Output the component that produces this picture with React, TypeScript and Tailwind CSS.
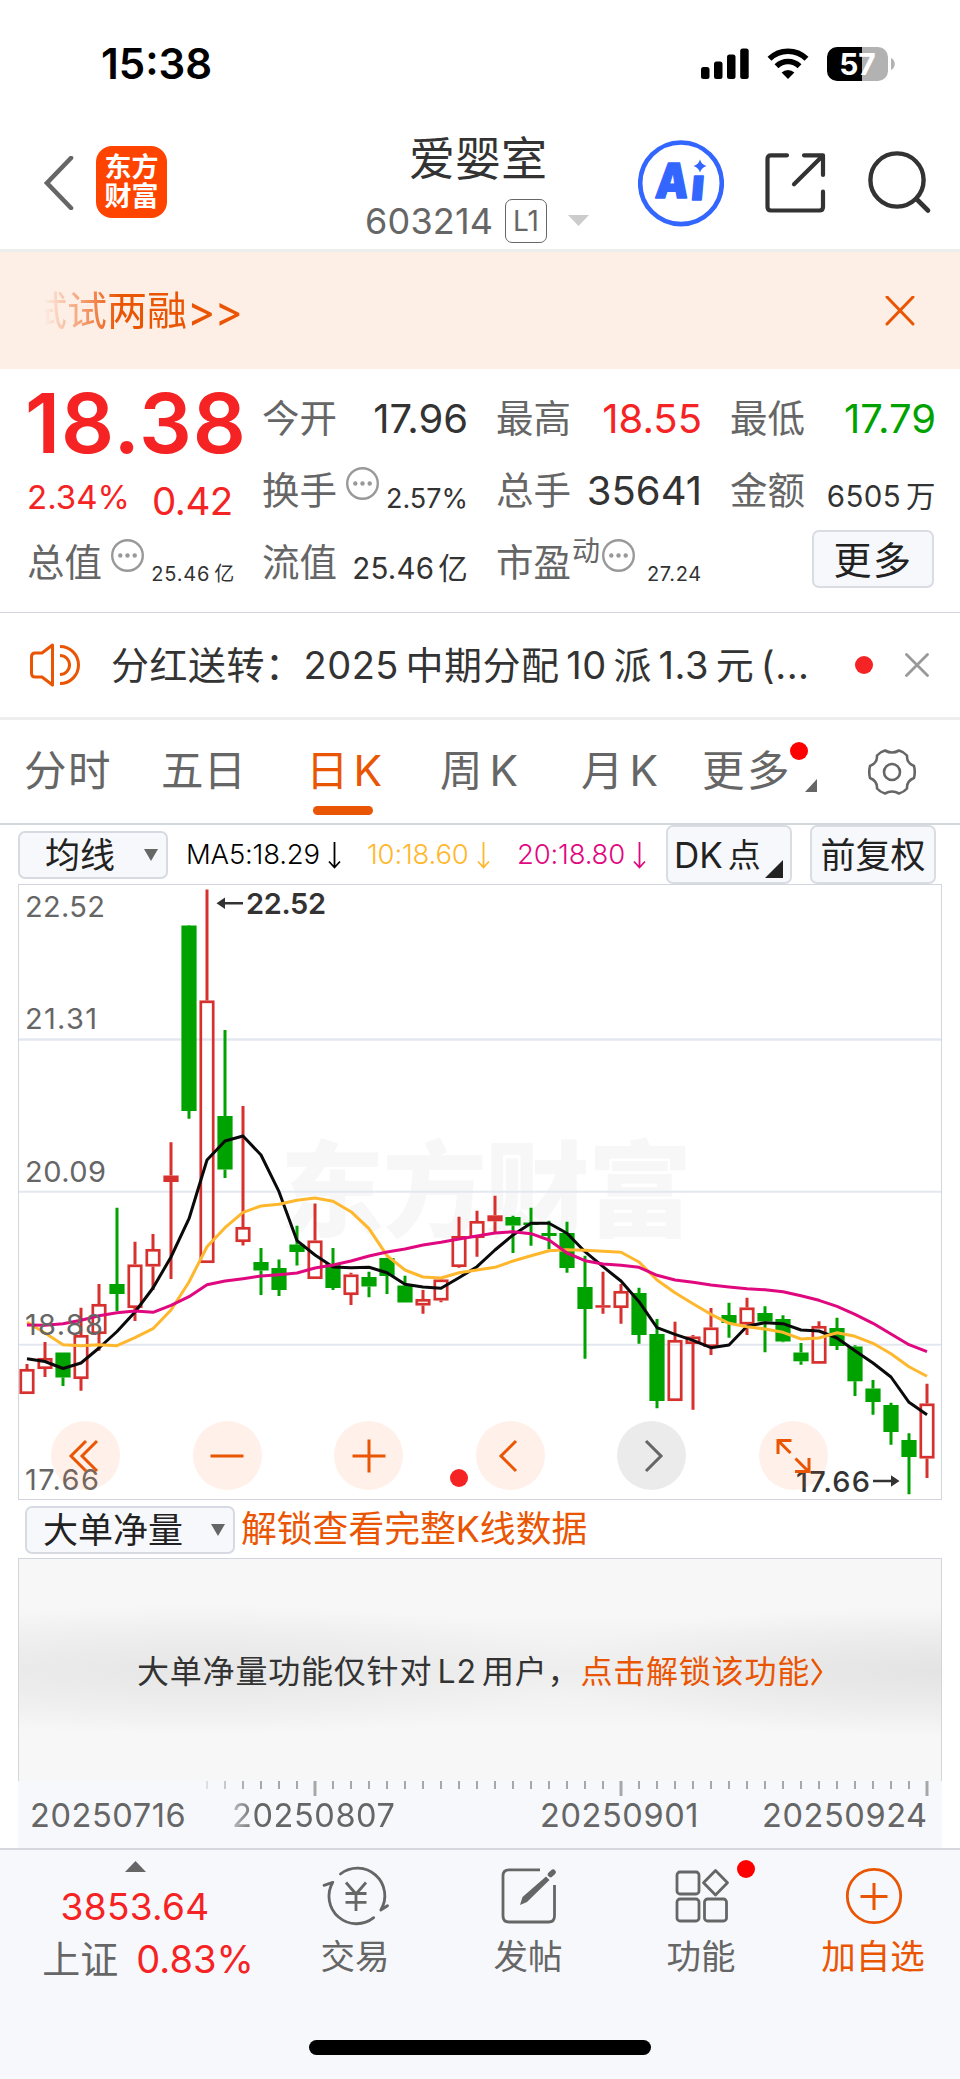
import type { ReactNode } from 'react';
import { clsx } from 'clsx';

// x step of one trading day and the centre of the first candle
const STEP = 18;
const START = 27;

type Candle = ['r' | 'g' | 's', number, number, number, number];

// kind (r hollow, s solid red, g green), high, body top, body bottom, low
const candles: Candle[] = [
  ['r', 1364, 1369, 1394, 1394],
  ['r', 1342, 1358, 1369, 1377],
  ['g', 1352.5, 1352.5, 1377.5, 1386],
  ['r', 1307.7, 1335, 1379, 1390.7],
  ['r', 1284, 1304, 1334, 1350.7],
  ['g', 1207.7, 1284, 1294, 1311],
  ['r', 1241.7, 1264.5, 1308, 1321],
  ['r', 1234, 1249, 1266.5, 1290],
  ['s', 1142.3, 1175.5, 1182, 1279],
  ['g', 925, 925.5, 1111, 1118.7],
  ['r', 889.5, 1000.5, 1263, 1263],
  ['g', 1030, 1116, 1169.5, 1178],
  ['r', 1106, 1227, 1242, 1245.5],
  ['g', 1248, 1262, 1270.5, 1295],
  ['g', 1259.5, 1268, 1290, 1296],
  ['g', 1225.7, 1244.5, 1252, 1265.5],
  ['r', 1203.5, 1240.5, 1279, 1279],
  ['g', 1248, 1264, 1288, 1290],
  ['r', 1272.7, 1274.5, 1295, 1305],
  ['g', 1271.7, 1277, 1286.5, 1297.3],
  ['g', 1257.7, 1258, 1276, 1294],
  ['g', 1275.7, 1285.5, 1302.5, 1302.5],
  ['r', 1290, 1299, 1305.5, 1313.7],
  ['r', 1278, 1279.5, 1300.5, 1302.3],
  ['r', 1216.7, 1236, 1267, 1267.7],
  ['r', 1210.7, 1221, 1238, 1256.7],
  ['s', 1195.7, 1215.3, 1221.3, 1234],
  ['g', 1215.7, 1217, 1225.5, 1253],
  ['g', 1207.7, 1222.5, 1225, 1245.7],
  ['g', 1220.7, 1233, 1236, 1249.3],
  ['g', 1221.7, 1233, 1268, 1272.7],
  ['g', 1255.7, 1287, 1309, 1358.7],
  ['s', 1271.7, 1305.2, 1307.7, 1313.7],
  ['r', 1284, 1291, 1308, 1323.7],
  ['g', 1287.7, 1293, 1335, 1343.7],
  ['g', 1319, 1334, 1401, 1408.3],
  ['r', 1321.7, 1340, 1401, 1401],
  ['r', 1335, 1336.5, 1344, 1409.7],
  ['r', 1308, 1327.5, 1347, 1355],
  ['g', 1302.7, 1315, 1323, 1337.7],
  ['r', 1297.7, 1307.5, 1324.5, 1335],
  ['g', 1306.3, 1313, 1321.5, 1352.3],
  ['g', 1315.3, 1319, 1341.5, 1342.3],
  ['g', 1343, 1352.5, 1361.3, 1364.7],
  ['r', 1321.3, 1326, 1363.7, 1363.7],
  ['g', 1317.7, 1328, 1346, 1350],
  ['g', 1345.3, 1346.5, 1381.3, 1396],
  ['g', 1380, 1388.5, 1402, 1414.7],
  ['g', 1402.7, 1405, 1432, 1444.7],
  ['g', 1433.3, 1440, 1457, 1494.3],
  ['r', 1383.7, 1403.5, 1458.5, 1478],
];

const ma5 = [
  1358.7, 1361.5, 1368.5, 1363, 1348, 1331.5, 1312, 1288, 1257, 1218.7, 1160, 1141, 1136, 1155, 1191.7, 1240.7, 1255,
  1267, 1267.7, 1267.3, 1272.7, 1284.3, 1287, 1288.3, 1277.7, 1266.7, 1250, 1235, 1223.3, 1223.3, 1233.3, 1251.7,
  1266.7, 1281, 1301.7, 1327.7, 1334.3, 1340.3, 1347.7, 1345, 1326.3, 1322.7, 1323.7, 1330, 1331, 1338, 1350.7, 1363,
  1377, 1402.3, 1414.7,
];
const ma10 = [
  1322.3, 1333, 1344.7, 1345.7, 1344.7, 1345.7, 1337.7, 1328.7, 1310, 1282, 1246.7, 1227.7, 1212.3, 1206, 1204.3,
  1200.3, 1198, 1201.3, 1211.7, 1228.7, 1255.7, 1270, 1277, 1278, 1272.7, 1270, 1267.3, 1261, 1255.7, 1250.7, 1249.7,
  1250.3, 1251.3, 1252.3, 1262, 1280, 1292.7, 1303.7, 1314.3, 1323.3, 1326.7, 1329, 1332.3, 1339, 1338, 1332.7,
  1336.3, 1343.3, 1353.7, 1366.7, 1376.3,
];
const ma20 = [
  1325, 1325.3, 1323.7, 1320.3, 1315.7, 1312.7, 1311, 1312.3, 1305.3, 1296.7, 1284.7, 1281, 1278.7, 1276, 1274.7, 1273,
  1268, 1265, 1261, 1256, 1252, 1249, 1245, 1242.3, 1239, 1236, 1233, 1231.7, 1233.7, 1240, 1253, 1260.7, 1264, 1265.3,
  1267.3, 1275.3, 1280, 1282.3, 1285, 1287, 1288.7, 1289.7, 1291.7, 1295.7, 1300.3, 1306.3, 1314.3, 1323.3, 1334,
  1344.7, 1351.7,
];

const toPoints = (values: number[]) => values.map((y, i) => `${START + i * STEP},${y}`).join(' ');

function StatusBar() {
  return (
    <div className="h-[110px] flex items-start justify-between pl-[101px] pr-[65px] text-black">
      <div className="mt-[43px] text-[42px] leading-[42px] font-semibold">15:38</div>
      <div className="mt-[46px] flex items-center h-[36px]">
        <svg width="48" height="32" viewBox="0 0 48 32">
          <rect x="0" y="19" width="8.5" height="12" rx="2.5" />
          <rect x="13" y="13.5" width="8.5" height="17.5" rx="2.5" />
          <rect x="26" y="6.5" width="8.5" height="24.5" rx="2.5" />
          <rect x="39.2" y="0.5" width="8.5" height="30.5" rx="2.5" />
        </svg>
        <svg className="ml-[18px]" width="42" height="32" viewBox="0 0 42 32">
          <g fill="none" stroke="#000" strokeWidth="5.6">
            <path d="M2.5 10.8 A26.5 26.5 0 0 1 39.5 10.8" />
            <path d="M9.5 18.2 A16.4 16.4 0 0 1 32.5 18.2" />
          </g>
          <path d="M21 31 L14.6 24.6 A9.2 9.2 0 0 1 27.4 24.6 Z" />
        </svg>
        <div className="ml-[18px] w-[61px] h-[34px] rounded-[10px] bg-[linear-gradient(90deg,#000_57%,#b2b2b2_57%)] flex items-center justify-center text-white text-[30px] leading-none font-bold">
          57
        </div>
        <svg className="ml-[3px]" width="4" height="12" viewBox="0 0 4 12">
          <path d="M0 0 C5 2 5 10 0 12 Z" fill="#b2b2b2" />
        </svg>
      </div>
    </div>
  );
}

function Header() {
  return (
    <div className="h-[142px] border-b-[3px] border-[#ededed] flex items-start">
      <svg className="ml-[42px] mt-[46px]" width="34" height="54" viewBox="0 0 34 54" fill="none">
        <path d="M29 2 L5 27 L29 52" stroke="#666" strokeWidth="4.6" strokeLinecap="round" />
      </svg>
      <div className="ml-[20px] mt-[36px] w-[71px] h-[72px] rounded-[16px] bg-[#ff4400] text-white text-[27px] leading-[29px] font-bold flex flex-col items-center justify-center">
        <span>东方</span>
        <span>财富</span>
      </div>
      <div className="ml-[190px] w-[240px] mt-[24px] text-[#333]">
        <div className="pl-[52px] text-[46px] leading-[48px] whitespace-nowrap">爱婴室</div>
        <div className="mt-[17px] pl-[8px] flex items-center h-[44px] text-[#666]">
          <span className="w-[140px] text-[36px] leading-none tracking-[0.2px]">603214</span>
          <span className="w-[42px] h-[44px] border-[1.5px] border-[#666] rounded-[7px] text-[28px] leading-none flex items-center justify-center">
            L1
          </span>
          <svg className="ml-[21px] mb-[2px]" width="21" height="11" viewBox="0 0 21 11">
            <path d="M0 0 H21 L10.5 11 Z" fill="#ccc" />
          </svg>
        </div>
      </div>
      <svg className="ml-[41px] mt-[30px]" width="86" height="87" viewBox="0 0 86 87">
        <circle cx="43" cy="43.3" r="40.8" fill="none" stroke="#3366ff" strokeWidth="4.6" />
        <g fill="#3366ff" stroke="#3366ff" strokeWidth="1.5" strokeLinejoin="round" className="font-black">
          <text x="16.500" y="58" fontSize="48" textLength="33" lengthAdjust="spacingAndGlyphs" transform="translate(5 0) skewX(-5)">A</text>
          <text x="52.500" y="60.500" fontSize="44" transform="translate(5 0) skewX(-5)">ı</text>
        </g>
        <path d="M62 19.500 Q63.5 24.500 68.5 26 Q63.5 27.500 62 32.500 Q60.5 27.500 55.5 26 Q60.5 24.500 62 19.500 Z" fill="#3366ff" />
      </svg>
      <svg
        className="ml-[40px] mt-[41px]"
        width="64"
        height="64"
        viewBox="0 0 64 64"
        fill="none"
        stroke="#333"
        strokeWidth="4.2"
        strokeLinecap="round"
      >
        <path d="M23 4.3 H7 Q3.5 4.3 3.5 7.8 V56 Q3.5 59.5 7 59.5 H55.5 Q59 59.5 59 56 V40.5" />
        <path d="M40 4.3 H59 V24 M58 5.5 L30 33.3" strokeLinejoin="round" />
      </svg>
      <svg className="ml-[38px] mt-[39px]" width="66" height="66" viewBox="0 0 66 66" fill="none" stroke="#333" strokeLinecap="round">
        <circle cx="31" cy="31" r="26.6" strokeWidth="4.4" />
        <path d="M50.5 50 L62 61.5" strokeWidth="4.6" />
      </svg>
    </div>
  );
}

function MarginBanner() {
  return (
    <div className="h-[117px] bg-[#fdeee6] flex items-center justify-between pl-[27px] pr-[45px] text-[#ea5504]">
      <div className="flex text-[40px] leading-[50px] whitespace-nowrap [mask-image:linear-gradient(90deg,transparent_17px,black_92px)]">
        <span>试试两融</span>
        <span className="text-[43px] tracking-[-1px]">&gt;&gt;</span>
      </div>
      <svg width="30" height="30" viewBox="0 0 30 30" stroke="#ea5504" strokeWidth="3" strokeLinecap="round">
        <path d="M2 1 L28 28 M28 1 L2 28" />
      </svg>
    </div>
  );
}

function InfoDots({ className }: { className: string }) {
  return (
    <svg className={clsx('shrink-0', className)} width="33" height="33" viewBox="0 0 33 33">
      <circle cx="16.5" cy="16.5" r="15.3" fill="none" stroke="#999" strokeWidth="2.4" />
      <g fill="#999">
        <circle cx="9.3" cy="16.5" r="2.2" />
        <circle cx="16.5" cy="16.5" r="2.2" />
        <circle cx="23.7" cy="16.5" r="2.2" />
      </g>
    </svg>
  );
}

function Cell({ label, extra, children }: { label: string; extra?: ReactNode; children: ReactNode }) {
  return (
    <div className="flex items-center h-[72px] whitespace-nowrap leading-none text-[#333]">
      <span className="text-[37.5px] text-[#666]">{label}</span>
      {extra}
      <span className="ml-auto">{children}</span>
    </div>
  );
}

function Quote() {
  return (
    <div className="h-[244px] border-b border-[#d3d5dd] pt-[14px] pl-[27px] pr-[24px] flex">
      <div className="w-[208px]">
        <div className="h-[82px] -mt-px -ml-[2px] text-[83px] leading-[82px] font-semibold tracking-[1px] text-[#f52323]">18.38</div>
        <div className="h-[63px] flex text-[#f52323] leading-none">
          <span className="mt-[17px] text-[33px] w-[125px]">2.34%</span>
          <span className="mt-[18px] text-[38.5px] tracking-[-0.5px]">0.42</span>
        </div>
        <Cell label="总值" extra={<InfoDots className="ml-[9px] mb-[15px]" />}>
          <span className="block pt-[21px] text-[20px] tracking-[0.8px]">25.46<span className="ml-[4px]">亿</span></span>
        </Cell>
      </div>
      <div className="ml-[27px] w-[206px]">
        <Cell label="今开"><span className="text-[40px]">17.96</span></Cell>
        <Cell label="换手" extra={<InfoDots className="ml-[9px] mb-[15px]" />}>
          <span className="block pt-[14px] text-[27px]">2.57%</span>
        </Cell>
        <Cell label="流值">
          <span className="block pt-[11px] text-[29.5px] tracking-[0.2px]">25.46<span className="ml-[4px]">亿</span></span>
        </Cell>
      </div>
      <div className="ml-[28px] w-[206px]">
        <Cell label="最高"><span className="text-[40px] text-[#f52323]">18.55</span></Cell>
        <Cell label="总手"><span className="text-[40px]">35641</span></Cell>
        <Cell
          label="市盈"
          extra={
            <>
              <span className="ml-[1px] mb-[25px] text-[28px] text-[#666]">动</span>
              <InfoDots className="ml-[2px] mb-[15px]" />
            </>
          }
        >
          <span className="block pt-[21px] text-[20px] tracking-[0.7px]">27.24</span>
        </Cell>
      </div>
      <div className="ml-[28px] w-[206px]">
        <Cell label="最低"><span className="text-[40px] text-[#00a200]">17.79</span></Cell>
        <Cell label="金额">
          <span className="block pt-[11px] text-[29.5px] tracking-[0.4px]">6505<span className="ml-[5px]">万</span></span>
        </Cell>
        <button className="ml-auto mr-[2px] mt-[3px] w-[122px] h-[58px] rounded-[7px] border-2 border-[#dadce4] bg-[#f7f8fb] text-[#222] text-[38px] leading-none tracking-[1.5px] pt-[2px] flex items-center justify-center">
          更多
        </button>
      </div>
    </div>
  );
}

function NewsRow() {
  return (
    <div className="h-[107px] border-b-[3px] border-[#eeeeee] flex items-center pl-[28px] leading-none text-[#333]">
      <svg width="54" height="44" viewBox="0 0 54 44" fill="none" stroke="#ea5504" strokeWidth="3" strokeLinejoin="round">
        <path d="M24.5 2 L14 10 H7 Q3.5 10 3.5 14 V30 Q3.5 34 7 34 H14 L24.5 42 Z" />
        <path d="M32 3.5 A18.5 18.5 0 0 1 32 40.5 M32 12.5 A9.5 9.5 0 0 1 32 31.5" />
      </svg>
      <span className="ml-[29px] w-[697px] text-[38px] tracking-[0.5px] [word-spacing:-4.5px] whitespace-nowrap">分红送转：2025 中期分配 10 派 1.3 元 (...</span>
      <span className="ml-[47px] size-[18px] rounded-full bg-[#f52323]" />
      <svg className="ml-[32px]" width="24" height="24" viewBox="0 0 24 24" stroke="#999" strokeWidth="2.8" strokeLinecap="round">
        <path d="M1.5 1.5 L22.5 22.5 M22.5 1.5 L1.5 22.5" />
      </svg>
    </div>
  );
}

function Tabs() {
  return (
    <div className="h-[105px] border-b-2 border-[#d3d8dd] flex items-center leading-none text-[42.5px] text-[#666] whitespace-nowrap">
      <span className="ml-[24px] w-[137px] tracking-[1.5px]">分时</span>
      <span className="w-[145px]">五日</span>
      <span className="relative w-[134px] text-[#ea5504]">
        日<span className="ml-[5px]">K</span>
        <span className="absolute left-[7px] top-[56px] w-[60px] h-[9px] rounded-full bg-[#ea5504]" />
      </span>
      <span className="w-[141px]">周<span className="ml-[7px]">K</span></span>
      <span className="w-[121px]">月<span className="ml-[6px]">K</span></span>
      <span className="relative tracking-[2.5px]">
        更多
        <span className="absolute left-[88px] -top-[8px] size-[18px] rounded-full bg-[#ff0000]" />
        <svg className="absolute left-[103px] top-[29px]" width="12" height="13" viewBox="0 0 12 13">
          <path d="M12 0 V13 H0 Z" fill="#666" />
        </svg>
      </span>
      <svg className="ml-auto mr-[43px]" width="50" height="48" viewBox="0 0 50 48" fill="none" stroke="#666" strokeWidth="2.6" strokeLinejoin="round">
        <circle cx="25" cy="24" r="8" />
        <path d="M18 2.5 Q25 6.500 32 2.5 Q37 4 40 7.500 Q39.5 15 47 18 Q48.5 24 47 30 Q39.5 33 40 40.500 Q37 44 32 45.5 Q25 41.5 18 45.5 Q13 44 10 40.500 Q10.500 33 3 30 Q1.500 24 3 18 Q10.500 15 10 7.500 Q13 4 18 2.5 Z" />
      </svg>
    </div>
  );
}

function DownArrow() {
  return (
    <svg className="ml-[8px]" width="13" height="28" viewBox="0 0 13 28" fill="none" stroke="currentColor" strokeWidth="1.8">
      <path d="M6.500 1 V26 M1 20.500 L6.500 26.500 L12 20.500" />
    </svg>
  );
}

function Average({ className, children }: { className: string; children: ReactNode }) {
  return (
    <span className={clsx('flex items-center pt-px text-[27.5px] font-light tracking-[-0.2px]', className)}>
      {children}
      <DownArrow />
    </span>
  );
}

function Toolbar() {
  return (
    <div className="h-[59px] flex items-center pl-[18px] leading-none whitespace-nowrap">
      <button className="w-[150px] h-[48px] rounded-[7px] border-2 border-[#d8dae3] bg-[#f7f8fb] flex items-center pl-[25px] text-[35px] text-[#222]">
        <span className="pt-[2px]">均线</span>
        <svg className="ml-[29px]" width="14" height="12" viewBox="0 0 14 12">
          <path d="M0 0 H14 L7 12 Z" fill="#666" />
        </svg>
      </button>
      <Average className="ml-[18px] w-[181px] text-black">MA5:18.29</Average>
      <Average className="w-[150px] text-[#ffb72e]">10:18.60</Average>
      <Average className="w-[149px] text-[#e0087f]">20:18.80</Average>
      <button className="relative w-[126px] h-[59px] rounded-[7px] border-2 border-[#dadce4] bg-[#f7f8fb] pl-[6px] pt-[2px] flex items-center text-[35px] text-[#222]">
        DK<span className="ml-[5px] text-[33px]">点</span>
        <svg className="absolute right-[7px] bottom-[4px]" width="18" height="18" viewBox="0 0 18 18">
          <path d="M18 0 V18 H0 Z" fill="#222" />
        </svg>
      </button>
      <button className="ml-[18px] w-[126px] h-[59px] rounded-[7px] border-2 border-[#dadce4] bg-[#f7f8fb] pt-[2px] flex items-center justify-center text-[35px] text-[#222]">
        前复权
      </button>
    </div>
  );
}

function CandleMark({ candle, x }: { candle: Candle; x: number }) {
  const [kind, high, top, bottom, low] = candle;
  const color = kind === 'g' ? '#00a200' : '#d6302f';
  return (
    <g stroke={color} strokeWidth="3" fill="none">
      <path d={`M${x} ${high} V${top} M${x} ${bottom} V${low}`} />
      {kind === 'r' ? (
        <rect x={x - 6.2} y={top + 1.3} width="12.4" height={bottom - top - 2.6} strokeWidth="2.7" />
      ) : (
        <rect x={x - 7.6} y={top} width="15.2" height={bottom - top} fill={color} stroke="none" />
      )}
    </g>
  );
}

function CircleButton({ grey, children }: { grey?: boolean; children: ReactNode }) {
  return (
    <button
      className={clsx(
        'size-[69px] rounded-full flex items-center justify-center',
        grey ? 'bg-black/8 text-[#666]' : 'bg-[#ff6a20]/10 text-[#ea5504]',
      )}
    >
      <svg width="36" height="36" viewBox="0 0 36 36" fill="none" stroke="currentColor" strokeWidth="3">
        {children}
      </svg>
    </button>
  );
}

function KChart() {
  return (
    <div className="relative h-[616px] mx-[18px]">
      <svg className="block" width="924" height="616" viewBox="18 884 924 616">
        <text x="280" y="1229" fontSize="104" textLength="412" fill="#f7f7f7" className="font-black">东方财富</text>
        <g stroke="#e3e7f0">
          <path d="M18 1039.500 H942" strokeWidth="2.600" />
          <path d="M18 1191.700 H942 M18 1344.700 H942" strokeWidth="2" />
        </g>
        <rect x="18.500" y="884.500" width="923" height="615" fill="none" stroke="#d3d5dd" />
        {candles.map((candle, i) => (
          <CandleMark key={i} candle={candle} x={START + i * STEP} />
        ))}
        <g fill="none" strokeWidth="3" strokeLinejoin="round">
          <polyline points={toPoints(ma5)} stroke="#0a0a0a" />
          <polyline points={toPoints(ma10)} stroke="#ffb72e" />
          <polyline points={toPoints(ma20)} stroke="#e0087f" />
        </g>
        <g fontSize="29" fill="#666">
          <text x="25" y="917" textLength="80">22.52</text>
          <text x="25" y="1029" textLength="72">21.31</text>
          <text x="25" y="1182" textLength="81">20.09</text>
          <text x="25" y="1335" textLength="78">18.88</text>
          <text x="25" y="1489.500" textLength="74">17.66</text>
        </g>
        <g fontSize="29" fill="#333" className="font-semibold">
          <text x="246" y="914" textLength="80">22.52</text>
          <text x="796" y="1492" textLength="74" className="font-medium">17.66</text>
        </g>
        <g fill="#333" stroke="#333">
          <path d="M224 903.300 H243 M873 1481 H892" strokeWidth="2.600" />
          <path d="M216.500 903.300 L225 897.500 V909 Z M899.500 1481 L891 1475.200 V1486.800 Z" stroke="none" />
        </g>
        <circle cx="459" cy="1478" r="9" fill="#f52323" />
      </svg>
      <div className="absolute left-[33px] top-[537px] w-[777px] flex justify-between">
        <CircleButton><path d="M18 3 L3 18 L18 33 M29 3 L14 18 L29 33" /></CircleButton>
        <CircleButton><path d="M1.500 18 H34.500" /></CircleButton>
        <CircleButton><path d="M1.500 18 H34.500 M18 1.500 V34.500" /></CircleButton>
        <CircleButton><path d="M24 3 L9 18 L24 33" /></CircleButton>
        <CircleButton grey><path d="M12 3 L27 18 L12 33" /></CircleButton>
        <CircleButton>
          <path d="M3 16 V2.500 H16.500 M4 3.500 L15.500 15 M20.500 20.500 L32.500 32.500 M34 20 V33.500 H20" />
        </CircleButton>
      </div>
    </div>
  );
}

function IndicatorRow() {
  return (
    <div className="h-[58px] pt-[2px] flex items-center pl-[25px] leading-none whitespace-nowrap">
      <button className="w-[210px] h-[48px] rounded-[7px] border-2 border-[#d8dae3] bg-[#f7f8fb] flex items-center pl-[16px] text-[35px] text-[#222]">
        <span className="pt-px">大单净量</span>
        <svg className="ml-[28px]" width="14" height="12" viewBox="0 0 14 12">
          <path d="M0 0 H14 L7 12 Z" fill="#666" />
        </svg>
      </button>
      <span className="ml-[6px] text-[35.8px] text-[#ea5504]">解锁查看完整K线数据</span>
    </div>
  );
}

function LockedPanel() {
  return (
    <div className="mx-[18px] h-[223px] border border-b-0 border-[#d3d5dd] bg-[#f7f7f7] bg-[radial-gradient(ellipse_400px_65px_at_180px_110px,#e7e7e7,transparent),radial-gradient(ellipse_400px_65px_at_920px_112px,#e4e4e4,transparent),linear-gradient(180deg,#f7f7f7_25%,#efefef_50%,#f7f7f7_78%)] pt-[3px] flex items-center justify-center leading-none text-[32px] text-[#333] whitespace-nowrap">
      <span className="tracking-[0.8px] [word-spacing:-4.5px]">大单净量功能仅针对 L2 用户，</span>
      <span className="tracking-[0.8px] text-[#ea5504]">点击解锁该功能</span>
      <svg width="13" height="30" viewBox="0 0 13 30" fill="none" stroke="#ea5504" strokeWidth="2.400">
        <path d="M2 2 L11 15 L2 28" />
      </svg>
    </div>
  );
}

function DateAxis() {
  const ticks = Array.from({ length: 41 }, (_, i) => 207 + i * STEP);
  return (
    <div className="mx-[18px] h-[67px] bg-[#f7f8fb]">
      <svg className="block" width="924" height="16" viewBox="18 0 924 16">
        {ticks.map((x, i) => {
          const major = x === 315 || x === 621 || x === 927;
          return (
            <path
              key={x}
              d={`M${x} 0 V${major ? 15 : 8}`}
              stroke="#999"
              strokeWidth={major ? 3 : 2}
              opacity={i < 3 ? (i + 1) * 0.25 : 0.85}
            />
          );
        })}
      </svg>
      <div className="mt-[3px] flex text-[32.5px] leading-none tracking-[0.6px] text-[#666]">
        <span className="ml-[12px] w-[202px]">20250716</span>
        <span className="w-[308px] [mask-image:linear-gradient(90deg,#0006,black_24px)]">20250807</span>
        <span className="w-[222px]">20250901</span>
        <span>20250924</span>
      </div>
    </div>
  );
}

function NavItem({ label, className, children }: { label: string; className: string; children: ReactNode }) {
  return (
    <div className={clsx('flex flex-col items-center whitespace-nowrap', className)}>
      <svg width="70" height="60" viewBox="0 0 70 60" fill="none" stroke="currentColor" strokeWidth="2.800" strokeLinecap="round">
        {children}
      </svg>
      <span className="mt-[14px] text-[34.5px] leading-none">{label}</span>
    </div>
  );
}

function BottomNav() {
  return (
    <div className="relative h-[231px] border-t-2 border-[#d5d7df] bg-[#f7f8fb] flex text-[#666]">
      <div className="w-[270px] flex flex-col items-center leading-none text-[#f52323]">
        <svg className="mt-[11px]" width="21" height="11" viewBox="0 0 21 11">
          <path d="M0 11 H21 L10.500 0 Z" fill="#666" />
        </svg>
        <span className="mt-[16px] text-[37px] tracking-[0.3px]">3853.64</span>
        <span className="mt-[15px] ml-[26px] flex items-center text-[38px] whitespace-nowrap">
          <span className="mr-[18px] text-[#666]">上证</span>0.83%
        </span>
      </div>
      <NavItem label="交易" className="ml-[50px] mt-[16px] w-[70px]">
        <path d="M20.400 8 A27.500 27.500 0 0 1 60.800 44 L67.500 39.700" strokeLinejoin="round" />
        <path d="M53.700 51.700 A27.500 27.500 0 0 1 12.800 16.300 L4 19.300" strokeLinejoin="round" />
        <path d="M26 16.500 L36 28 L46 16.500 M36 27 V45 M25.500 27.500 H46.500 M25.500 36.300 H46.500" strokeLinecap="butt" />
      </NavItem>
      <NavItem label="发帖" className="ml-[103px] mt-[16px] w-[70px]">
        <path d="M47 3.800 H16 Q10 3.800 10 9.800 V50 Q10 56 16 56 H55.500 Q61.500 56 61.500 50 V19" strokeLinecap="butt" />
        <path d="M27 39 L29.500 31 L53 10.500 L56.500 14 L34 36 Z" fill="currentColor" stroke="none" />
        <path d="M57.500 8.500 L60 6.200" strokeWidth="5.500" />
      </NavItem>
      <NavItem label="功能" className="ml-[103px] mt-[16px] w-[70px]">
        <rect x="11" y="6" width="22" height="22" rx="3" />
        <rect x="11" y="33" width="22" height="22" rx="3" />
        <rect x="38.500" y="33" width="22" height="22" rx="3" />
        <path d="M49.500 4.500 L61.500 16.800 L49.500 29 L37.500 16.800 Z" strokeLinejoin="round" />
      </NavItem>
      <span className="ml-px mt-[10px] size-[18px] rounded-full bg-[#ff0000]" />
      <NavItem label="加自选" className="ml-[83px] mt-[16px] w-[70px] text-[#ea5504]">
        <circle cx="36" cy="30" r="26.700" />
        <path d="M22.500 30.500 H49.500 M36 17 V44" strokeLinecap="butt" strokeWidth="3" />
      </NavItem>
      <div className="absolute left-[309px] bottom-[24px] w-[342px] h-[15px] rounded-full bg-black" />
    </div>
  );
}

export default function App() {
  return (
    <div className="w-[960px] h-[2079px] overflow-hidden bg-white font-['Inter','Noto_Sans_CJK_SC',sans-serif]">
      <StatusBar />
      <Header />
      <MarginBanner />
      <Quote />
      <NewsRow />
      <Tabs />
      <Toolbar />
      <KChart />
      <IndicatorRow />
      <LockedPanel />
      <DateAxis />
      <BottomNav />
    </div>
  );
}
